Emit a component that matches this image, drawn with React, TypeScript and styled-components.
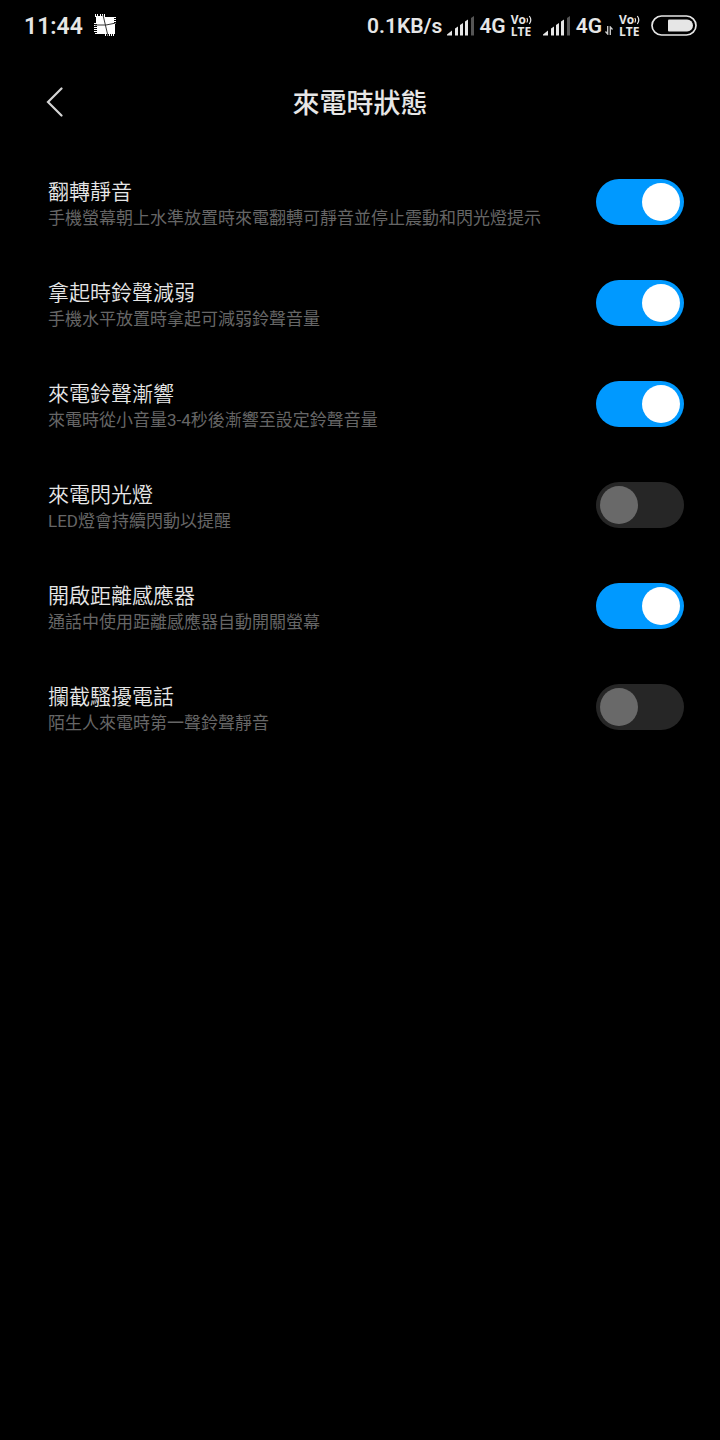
import React, { useId, useState } from 'react';
import styled, { createGlobalStyle } from 'styled-components';

const GlobalStyle = createGlobalStyle`
  *, *::before, *::after { box-sizing: border-box; }
  html, body { margin: 0; background: #000; }
  body {
    color: #e6e6e6;
    font-family: Roboto, "Noto Sans CJK TC", sans-serif;
  }
`;

const Screen = styled.div`
  display: flex;
  flex-direction: column;
  min-height: 100vh;
  background: #000;
`;

const StatusBar = styled.div`
  display: flex;
  align-items: center;
  justify-content: space-between;
  height: 51px;
  padding: 0 23px 0 24px;
  font-size: 23px;
  font-weight: 600;
  line-height: 28px;
`;

const StatusGroup = styled.div<{ $gap: number }>`
  display: flex;
  align-items: center;
  gap: ${({ $gap }) => $gap}px;
  svg { display: block; flex: none; }
`;

const Clock = styled.time`
  padding-top: 2px;
`;

const Network = styled.span`
  display: flex;
  align-items: center;
  gap: 3px;
  padding-top: 1px;
  font-size: 21px;
`;

const Volte = styled.span`
  display: flex;
  flex-direction: column;
  width: 22px;
  font-family: "Open Sans", sans-serif;
  font-size: 12px;
  font-weight: 700;
  line-height: 12px;
`;

const VolteTop = styled.span`
  display: flex;
  align-items: center;
`;

const Header = styled.header`
  display: grid;
  grid-template-columns: 1fr auto 1fr;
  align-items: center;
  height: 102px;
  padding: 0 35px;
`;

const BackButton = styled.button`
  display: flex;
  align-items: center;
  justify-content: center;
  justify-self: start;
  width: 40px;
  height: 48px;
  padding: 0;
  border: 0;
  background: none;
  color: #d4d4d4;
  cursor: pointer;
`;

const Title = styled.h1`
  margin: 0;
  padding-top: 4px;
  font-size: 27px;
  font-weight: 500;
  line-height: 40px;
`;

const SettingList = styled.main`
  display: flex;
  flex-direction: column;
  padding-top: 26px;
`;

const SettingRow = styled.div`
  display: flex;
  align-items: flex-start;
  justify-content: space-between;
  gap: 24px;
  padding: 0 36px 49px 48px;
`;

const SettingText = styled.div`
  min-width: 0;
`;

const SettingName = styled.label`
  display: block;
  font-size: 21px;
  font-weight: 350;
  line-height: 26px;
  color: #e6e6e6;
`;

const SettingHint = styled.p`
  margin: 0;
  font-size: 17px;
  line-height: 26px;
  color: #666;
`;

const Switch = styled.input`
  appearance: none;
  display: flex;
  flex: none;
  align-items: center;
  justify-content: flex-start;
  width: 88px;
  height: 46px;
  margin: 0;
  padding: 0 4px;
  border-radius: 23px;
  background: #262626;
  cursor: pointer;

  &::before {
    content: "";
    width: 38px;
    height: 38px;
    border-radius: 50%;
    background: #696969;
  }

  &:checked {
    justify-content: flex-end;
    background: #0099ff;
  }

  &:checked::before { background: #fff; }
`;

const AppIcon = () => (
  <svg width="23" height="23" viewBox="0 0 23 23" aria-hidden="true">
    <path
      fill="#fff"
      d="M1 0h1v2h1V0h1v2h2V0h1v2h1V0h1v2h1V0h1v3h11v1h-2v1h2v1h-2v1h2v1h-2v1h2v1h-1v10h-1v2h-1v-2h-1v2h-1v-2h-1v2h-1v-2h-1v2h-1v-2h-1v2h-1v-2H1v-1h2v-1H0v-1h3v-1H0v-1h3v-1H0v-1h3v-1H0v-1h3v-1H0v-1h2V3H1z"
    />
    <path d="M9 1l5 21M1 11l11 0 10-2" fill="none" stroke="#333" strokeWidth="1" />
  </svg>
);

const SignalIcon = () => (
  <svg width="27" height="20" viewBox="0 0 27 20" fill="#e6e6e6" aria-hidden="true">
    <path d="M0 19.5v-1L5 14.5v5zM8 12.5l3-2v9H8zM13 9l3-2v12.500h-3zM18 5.500l3-2v16h-3z" />
    <path d="M24 2l3-2v19.500h-3z" fill="#555" />
  </svg>
);

const WavesIcon = () => (
  <svg width="6" height="10" viewBox="0 0 6 10" fill="none" stroke="#e6e6e6" strokeWidth="1.200" aria-hidden="true">
    <path d="M.8 3q1.500 2 0 4.500M3.300 1q3 4 0 8" />
  </svg>
);

const VolteBadge = () => (
  <Volte>
    <VolteTop>
      Vo
      <WavesIcon />
    </VolteTop>
    <span>LTE</span>
  </Volte>
);

const DataArrowsIcon = () => (
  <svg width="8" height="9" viewBox="0 0 8 9" fill="none" stroke="#d0d0d0" strokeWidth="1.300" aria-hidden="true">
    <path d="M2.700 0v8L.500 5.500M5.300 9V1l2.200 2.500" />
  </svg>
);

const BatteryIcon = () => (
  <svg width="46" height="21" viewBox="0 0 46 21" aria-hidden="true">
    <rect x="1" y="1" width="44" height="19" rx="9.500" fill="none" stroke="#e6e6e6" strokeWidth="1.700" />
    <path d="M18 4.500h18a6 6 0 0 1 0 12H18a1 1 0 0 1-1-1v-10a1 1 0 0 1 1-1z" fill="#e6e6e6" />
  </svg>
);

const ArrowSlot = styled.span`
  display: flex;
  padding-top: 8px;
`;

const BackIcon = () => (
  <svg width="18" height="30" viewBox="0 0 18 30" fill="none" stroke="currentColor" strokeWidth="2.200" strokeLinecap="round" aria-hidden="true">
    <path d="M15.500 1.500L2 15l13.500 13.500" />
  </svg>
);

interface Setting {
  name: string;
  hint: string;
  on: boolean;
}

const settings: Setting[] = [
  { name: '翻轉靜音', hint: '手機螢幕朝上水準放置時來電翻轉可靜音並停止震動和閃光燈提示', on: true },
  { name: '拿起時鈴聲減弱', hint: '手機水平放置時拿起可減弱鈴聲音量', on: true },
  { name: '來電鈴聲漸響', hint: '來電時從小音量3-4秒後漸響至設定鈴聲音量', on: true },
  { name: '來電閃光燈', hint: 'LED燈會持續閃動以提醒', on: false },
  { name: '開啟距離感應器', hint: '通話中使用距離感應器自動開關螢幕', on: true },
  { name: '攔截騷擾電話', hint: '陌生人來電時第一聲鈴聲靜音', on: false },
];

const SettingItem = ({ name, hint, on }: Setting) => {
  const id = useId();
  const [checked, setChecked] = useState(on);
  return (
    <SettingRow>
      <SettingText>
        <SettingName htmlFor={id}>{name}</SettingName>
        <SettingHint id={`${id}-hint`}>{hint}</SettingHint>
      </SettingText>
      <Switch
        id={id}
        type="checkbox"
        role="switch"
        aria-describedby={`${id}-hint`}
        checked={checked}
        onChange={(e) => setChecked(e.target.checked)}
      />
    </SettingRow>
  );
};

export default function App() {
  return (
    <>
      <GlobalStyle />
      <Screen lang="zh-Hant">
        <StatusBar>
          <StatusGroup $gap={11}>
            <Clock>11:44</Clock>
            <AppIcon />
          </StatusGroup>
          <StatusGroup $gap={10}>
            <StatusGroup $gap={5}>
              <Network>0.1KB/s</Network>
              <SignalIcon />
              <Network>4G</Network>
              <VolteBadge />
            </StatusGroup>
            <StatusGroup $gap={6}>
              <SignalIcon />
              <Network>
                4G
                <ArrowSlot>
                  <DataArrowsIcon />
                </ArrowSlot>
              </Network>
              <VolteBadge />
            </StatusGroup>
            <BatteryIcon />
          </StatusGroup>
        </StatusBar>
        <Header>
          <BackButton type="button" aria-label="返回">
            <BackIcon />
          </BackButton>
          <Title>來電時狀態</Title>
        </Header>
        <SettingList>
          {settings.map((s) => (
            <SettingItem key={s.name} {...s} />
          ))}
        </SettingList>
      </Screen>
    </>
  );
}
